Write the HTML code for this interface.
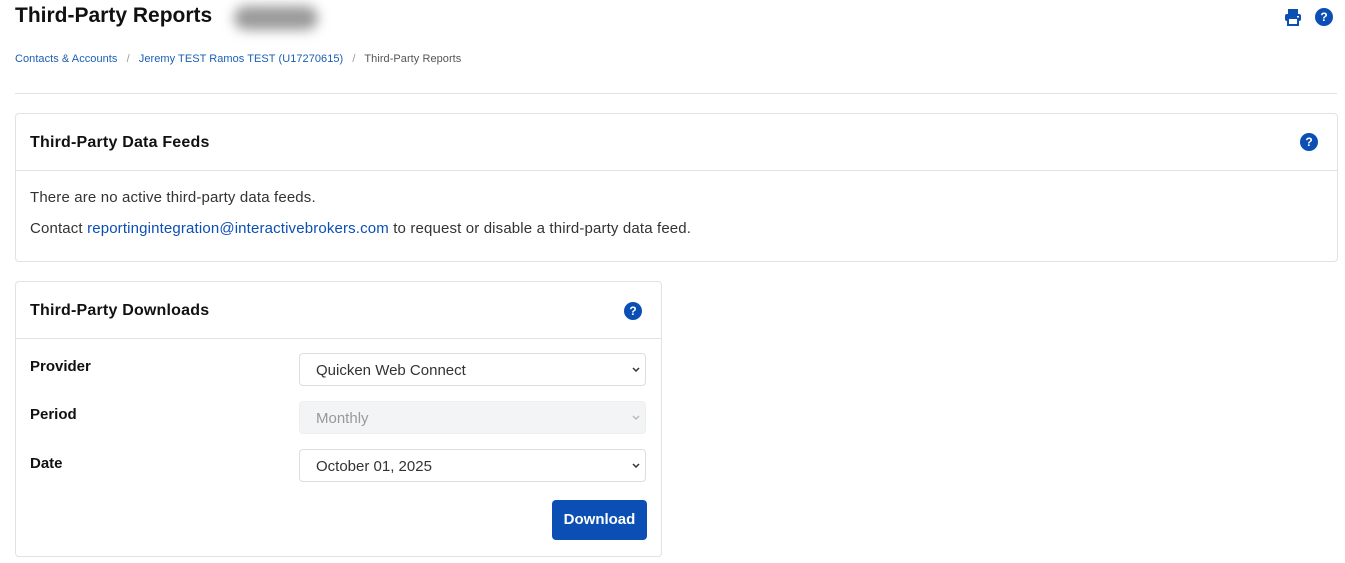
<!DOCTYPE html>
<html><head><meta charset="utf-8"><style>
*{box-sizing:border-box;margin:0;padding:0}
body{width:1345px;height:563px;background:#fff;font-family:"Liberation Sans",sans-serif;color:#222;position:relative;overflow:hidden}
.a{position:absolute}
.card{position:absolute;border:1px solid #e2e2e2;border-radius:4px;background:#fff}
.hd{position:absolute;left:0;right:0;top:0;height:57px;border-bottom:1px solid #e2e2e2}
.ht{position:absolute;left:14px;top:20px;font-size:16px;font-weight:bold;color:#111;letter-spacing:0.2px}
.q{position:absolute;width:18px;height:18px;border-radius:50%;background:#0b4fb5;color:#fff;font-size:12px;font-weight:bold;text-align:center;line-height:18px}
.sel{position:absolute;left:299px;width:347px;height:33px;border:1px solid #ddd;border-radius:4px;font-size:15px;padding:8px 0 0 16px;color:#333}
.sel svg{position:absolute;right:4px;top:12px}
.lb{position:absolute;left:30px;font-size:15px;font-weight:bold;color:#111}
</style></head><body>
<div class="a" style="left:15px;top:4px;font-size:21px;font-weight:bold;color:#111">Third-Party Reports</div>
<div class="a" style="left:234px;top:6px;width:84px;height:24px;border-radius:12px;background:#9a9a9a;filter:blur(6px)"></div>
<svg class="a" style="left:1284px;top:8px" width="18" height="18" viewBox="0 0 18 18"><rect x="4" y="1" width="10" height="5" fill="#0b4fb5"/><rect x="1" y="6" width="16" height="7" rx="2" fill="#0b4fb5"/><rect x="4" y="10" width="10" height="7" fill="#fff" stroke="#0b4fb5" stroke-width="2"/><rect x="13" y="8" width="2" height="1.5" fill="#fff"/></svg>
<div class="q" style="left:1315px;top:8px">?</div>
<div class="a" style="left:15px;top:53px;font-size:11px;color:#1a5fb4;letter-spacing:0.05px">Contacts &amp; Accounts <span style="color:#999;margin:0 6px">/</span> Jeremy TEST Ramos TEST (U17270615) <span style="color:#999;margin:0 6px">/</span> <span style="color:#555">Third-Party Reports</span></div>
<div class="a" style="left:15px;top:93px;width:1322px;height:1px;background:#e2e2e2"></div>

<div class="card" style="left:15px;top:113px;width:1323px;height:149px">
<div class="hd"><div class="ht">Third-Party Data Feeds</div><div class="q" style="left:1284px;top:19px">?</div></div>
<div class="a" style="left:14px;top:75px;font-size:15px;color:#333;letter-spacing:0.15px">There are no active third-party data feeds.</div>
<div class="a" style="left:14px;top:106px;font-size:15px;color:#333;letter-spacing:0.15px">Contact <span style="color:#0b4fb5">reportingintegration@interactivebrokers.com</span> to request or disable a third-party data feed.</div>
</div>

<div class="card" style="left:15px;top:281px;width:647px;height:276px">
<div class="hd"><div class="ht">Third-Party Downloads</div><div class="q" style="left:608px;top:20px">?</div></div>
</div>
<div class="lb" style="top:358px">Provider</div>
<div class="lb" style="top:406px">Period</div>
<div class="lb" style="top:455px">Date</div>
<div class="sel" style="top:353px">Quicken Web Connect<svg width="10" height="8" viewBox="0 0 10 8"><path d="M2 2l3 3 3-3" stroke="#333" stroke-width="1.5" fill="none"/></svg></div>
<div class="sel" style="top:401px;background:#f3f4f5;border-color:#eee;color:#999">Monthly<svg width="10" height="8" viewBox="0 0 10 8"><path d="M2 2l3 3 3-3" stroke="#bbb" stroke-width="1.5" fill="none"/></svg></div>
<div class="sel" style="top:449px">October 01, 2025<svg width="10" height="8" viewBox="0 0 10 8"><path d="M2 2l3 3 3-3" stroke="#333" stroke-width="1.5" fill="none"/></svg></div>
<div class="a" style="left:552px;top:500px;width:95px;height:40px;border-radius:4px;background:#0b4fb5;color:#fff;font-size:15px;font-weight:bold;text-align:center;line-height:40px">Download</div>
</body></html>
